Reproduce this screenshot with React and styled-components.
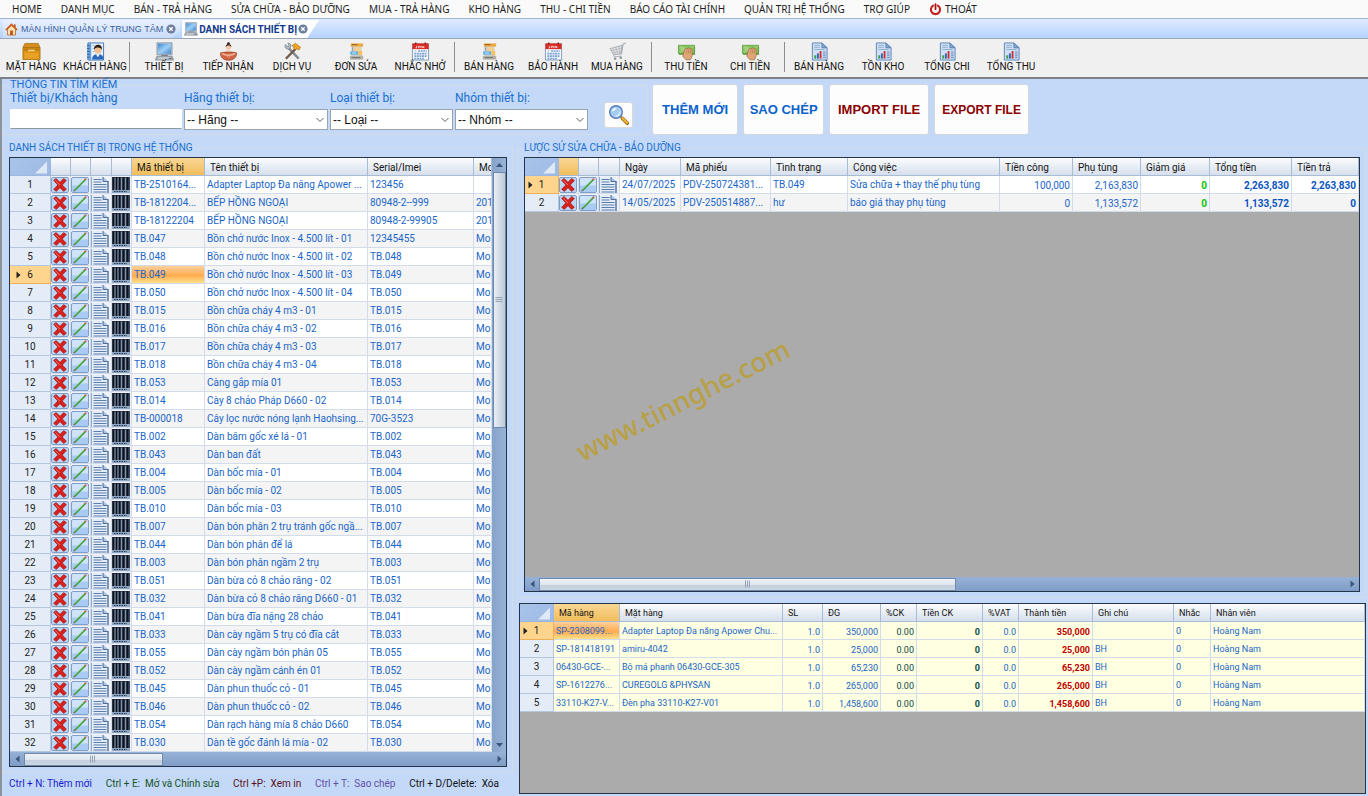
import styled, { createGlobalStyle, css } from 'styled-components';

const GlobalStyle = createGlobalStyle`
  * { box-sizing: border-box; }
  body { margin: 0; background: #c3d9f7; }
  button, input, select { font-family: inherit; margin: 0; }
`;

const sans = "'Liberation Sans', Arial, sans-serif";
const compact = "Roboto, 'Liberation Sans', Arial, sans-serif";
const humanist = "'Noto Sans', 'Open Sans', sans-serif";

const Page = styled.div`
  display: flex;
  flex-direction: column;
  height: 100vh;
  min-height: 480px;
  overflow: hidden;
  font-family: ${compact};
  font-size: 10px;
  color: #1c1c1c;
`;

/* ---------- menu ---------- */

const MenuBar = styled.nav`
  display: flex;
  gap: 19px;
  height: 18px;
  padding: 0 12px;
  background: #fafafa;
  white-space: nowrap;
`;

const MenuItem = styled.button`
  display: flex;
  align-items: center;
  gap: 3px;
  padding: 0;
  border: 0;
  background: none;
  font-family: ${humanist};
  font-size: 10px;
  color: #1c1c1c;
`;

/* ---------- tabs ---------- */

const TabBar = styled.div`
  display: flex;
  gap: 2px;
  height: 21px;
  padding: 1px 3px 0 3px;
  border-top: 1px solid #9fb6d6;
  border-bottom: 1px solid #9aa7b8;
  background: linear-gradient(#e0ebff, #b5d2fd);
`;

const Tab = styled.button`
  display: flex;
  align-items: center;
  gap: ${p => (p.$active ? '1px' : '3px')};
  padding: 0 ${p => (p.$active ? '11px' : '4px')} 0 2px;
  border: 0;
  background: ${p => (p.$active ? '#ffffff' : 'linear-gradient(#e9f1ff, #c9dcf8)')};
  clip-path: ${p => (p.$active
    ? 'polygon(0 0, 100% 0, calc(100% - 12px) 100%, 0 100%)'
    : 'polygon(0 0, 100% 0, 100% 55%, calc(100% - 8px) 100%, 0 100%)')};
  font-family: ${p => (p.$active ? compact : sans)};
  font-size: ${p => (p.$active ? '10px' : '9px')};
  font-weight: ${p => (p.$active ? 700 : 400)};
  color: ${p => (p.$active ? '#123a8c' : '#3b5f9f')};
  white-space: nowrap;
`;

/* ---------- toolbar ---------- */

const ToolBar = styled.div`
  display: flex;
  height: 40px;
  border-bottom: 2px solid #7d8187;
  background: #f0f0f0;
`;

const ToolButton = styled.button`
  flex: none;
  display: flex;
  flex-direction: column;
  align-items: center;
  width: 64px;
  padding: 3px 0 0;
  border: 0;
  background: none;
  font-size: 10px;
  line-height: 12px;
  color: #111;
  white-space: nowrap;
  &:first-child { margin-left: -1px; }
`;

const ToolSeparator = styled.div`
  flex: none;
  width: 1px;
  margin: 3px 2px 5px;
  background: #8d8d8d;
`;

/* ---------- main area ---------- */

const Main = styled.main`
  flex: 1;
  min-height: 0;
  display: flex;
  flex-direction: column;
  padding-right: 2px;
  border-left: 2px solid #8b929c;
  background: #c3d9f7;
`;

const SearchRow = styled.div`
  display: flex;
  gap: 4px;
  height: 56px;
  margin-bottom: 7px;
`;

const Group = styled.fieldset`
  flex: ${p => p.$flex || '1'};
  display: flex;
  flex-direction: column;
  min-width: 0;
  min-height: 0;
  margin: 0;
  padding: ${p => p.$pad || '3px 5px 5px 6px'};
  border: 1px solid #d2dbe6;
`;

const GroupTitle = styled.legend`
  margin: 0;
  padding: 0 1px 0 0;
  line-height: 12px;
  font-size: ${p => (p.$large ? '11px' : '10px')};
  color: #1a6fd0;
  white-space: nowrap;
`;

const SearchFields = styled.div`
  display: flex;
  align-items: flex-start;
  gap: 2px;
`;

const Field = styled.label`
  display: flex;
  flex-direction: column;
  gap: 3px;
  width: ${p => p.$width};
  font-size: 12px;
  line-height: 15px;
  color: #1a6fd0;
  white-space: nowrap;
`;

const TextBox = styled.input`
  width: 100%;
  height: 20px;
  padding: 0 3px;
  border: 1px solid #ffffff;
  border-bottom-color: #8f97a3;
  background: #ffffff;
  font-size: 12px;
`;

const DropDown = styled.select`
  width: 100%;
  height: 21px;
  padding: 0 2px;
  border: 1px solid #9aa3b0;
  border-radius: 0;
  appearance: none;
  background: #ffffff url("data:image/svg+xml,%3Csvg xmlns='http://www.w3.org/2000/svg' width='8' height='6'%3E%3Cpath d='M.5 1 4 4.500 7.500 1' fill='none' stroke='%23606060'/%3E%3C/svg%3E") no-repeat right 3px center;
  font-family: ${sans};
  font-size: 12px;
  color: #111;
`;

const SearchButton = styled.button`
  display: flex;
  align-items: center;
  justify-content: center;
  width: 29px;
  height: 26px;
  margin: 11px 0 0 14px;
  padding: 0;
  border: 1px solid #d9d9d9;
  border-radius: 3px;
  background: #fdfdfd;
`;

const ActionBar = styled.div`
  display: flex;
  flex: 716 1 0;
  gap: 5px;
  padding-top: 5px;
`;

const ActionButton = styled.button`
  width: ${p => p.$width};
  padding: 0;
  border: 1px solid #d3d8df;
  border-radius: 3px;
  background: #fdfdfd;
  font-family: ${sans};
  font-size: ${p => (p.$small ? '12px' : '13px')};
  font-weight: 700;
  color: ${p => p.$color};
  white-space: nowrap;
`;

const Columns = styled.div`
  flex: 1;
  min-height: 0;
  display: grid;
  grid-template-columns: minmax(0, 511fr) minmax(0, 849fr);
  gap: 4px;
`;

const Column = styled.section`
  display: flex;
  flex-direction: column;
  min-height: 0;
  min-width: 0;
`;

const DetailArea = styled.div`
  flex: none;
  display: flex;
  flex-direction: column;
  height: 198px;
  padding: 5px 0 2px 2px;
`;

const Shortcuts = styled.footer`
  display: flex;
  justify-content: space-between;
  align-items: center;
  height: 23px;
  padding: 0 14px 2px 7px;
  white-space: pre;
`;

const Shortcut = styled.span`
  color: ${p => p.$color};
`;

/* ---------- data grid ---------- */

const Frame = styled.div`
  position: relative;
  flex: 1;
  display: flex;
  flex-direction: column;
  min-height: 0;
  border: 1px solid #26344a;
  background: #ababab;
  overflow: hidden;
`;

const Viewport = styled.div`
  flex: 1;
  display: flex;
  min-height: 0;
`;

const TableClip = styled.div`
  flex: 1;
  min-width: 0;
  overflow: hidden;
`;

const Table = styled.table`
  width: 100%;
  table-layout: fixed;
  border-collapse: separate;
  border-spacing: 0;
  font-size: ${p => (p.$small ? '9px' : '10px')};
`;

const HeadCell = styled.th`
  height: 18px;
  padding: 2px 0 0 5px;
  border-right: 1px solid #a9bcd5;
  border-bottom: 1px solid #a9bcd5;
  background: ${p => (p.$active ? 'linear-gradient(#f9d794, #f1bd5c)' : 'linear-gradient(#fbfcfe, #d6dfec)')};
  font-weight: 400;
  line-height: 15px;
  text-align: left;
  color: #141414;
  white-space: nowrap;
  overflow: hidden;
`;

const CornerCell = styled.th`
  height: 18px;
  padding: 0;
  border-right: 1px solid #9fb7dc;
  border-bottom: 1px solid #9fb7dc;
  background: linear-gradient(135deg, #a9c4ea, #9dbae4);
`;

const CornerMark = styled.div`
  width: 12px;
  height: 12px;
  margin: 2px 3px 0 auto;
  background: #dfe8f5;
  clip-path: polygon(100% 0, 100% 100%, 0 100%);
`;

const RowHead = styled.th`
  height: 18px;
  padding: 0;
  border-right: 1px solid #b4c6de;
  border-bottom: 1px solid #b4c6de;
  background: #e4ecf7;
  font-weight: 400;
  font-size: 10px;
  line-height: 17px;
  text-align: center;
  color: #222;
  ${p => p.$active && css`
    border-color: #f0b05a;
    background: #ffd58d;
  `}
`;

const RowHeadInner = styled.span`
  display: flex;
  align-items: center;
  justify-content: center;
  gap: 5px;
  padding-right: ${p => (p.$active ? '12px' : '0')};
`;

const Cell = styled.td`
  height: 18px;
  padding: ${p => (p.$num ? '3px 2px 0 0' : '1px 0 0 2px')};
  border-right: 1px solid #d3dcea;
  border-bottom: 1px solid #d3dcea;
  background: ${p => p.$bg};
  font-weight: ${p => (p.$bold ? 700 : 400)};
  line-height: ${p => (p.$num ? '14px' : '16px')};
  text-align: ${p => (p.$num ? 'right' : 'left')};
  color: ${p => p.$color || '#1a66c8'};
  white-space: nowrap;
  overflow: hidden;
  ${p => p.$active && css`
    background: linear-gradient(#fdd09a 0%, #ffb566 40%, #ffab50 55%, #ffdf88 100%);
  `}
`;

const IconCell = styled.td`
  height: 18px;
  padding: 0;
  border-right: 1px solid #d3dcea;
  border-bottom: 1px solid #d3dcea;
  background: #eef2f8;
`;

const CellButton = styled.button`
  display: flex;
  align-items: center;
  width: 100%;
  height: 17px;
  padding: 0;
  border: 0;
  background: none;
`;

const ScrollV = styled.div`
  flex: none;
  display: flex;
  flex-direction: column;
  align-items: center;
  justify-content: space-between;
  width: 14px;
  background: linear-gradient(90deg, #86a3cb, #97b2d7);
`;

const ScrollH = styled.div`
  flex: none;
  display: flex;
  align-items: center;
  height: 14px;
  background: linear-gradient(#97b2d7, #7e9cc6);
`;

const ThumbV = styled.div`
  flex: 0 0 ${p => p.$size};
  display: flex;
  align-items: center;
  justify-content: center;
  width: 13px;
  margin-bottom: auto;
  border: 1px solid #6f89ad;
  background: linear-gradient(90deg, #e9eef4, #bccad8);
`;

const ThumbH = styled.div`
  flex: 0 0 ${p => p.$size};
  display: flex;
  align-items: center;
  justify-content: center;
  height: 13px;
  margin-right: auto;
  border: 1px solid #6f89ad;
  background: linear-gradient(#eef2f7 0%, #dfe6ee 50%, #c3cfde 55%, #ccd7e4 100%);
`;

const ScrollArrow = styled.button`
  flex: none;
  display: flex;
  align-items: center;
  justify-content: center;
  width: 14px;
  height: 14px;
  padding: 0;
  border: 0;
  background: none;
`;

const Watermark = styled.div`
  position: absolute;
  top: 222px;
  left: 36px;
  width: 244px;
  font-family: ${humanist};
  font-size: 27px;
  font-weight: 500;
  line-height: 40px;
  text-align: center;
  color: #b8a047;
  white-space: nowrap;
  transform: rotate(-27deg);
  pointer-events: none;
`;

/* ---------- icons ---------- */

const PowerIcon = () => (
  <svg width="13" height="13" viewBox="0 0 13 13" fill="none" strokeLinecap="round">
    <path d="M4.100 2.600a4.600 4.600 0 1 0 4.800 0" stroke="#c4201d" strokeWidth="2.100" />
    <path d="M6.500 1.200v5" stroke="#a31412" strokeWidth="1.800" />
  </svg>
);

const HomeIcon = () => (
  <svg width="13" height="13" viewBox="0 0 13 13">
    <path d="M2.500 6v6h8V6L6.500 2.500z" fill="#f7e2b4" stroke="#b5691f" strokeWidth=".8" />
    <path d="M9 1.500h1.600v3H9z" fill="#b5481f" />
    <path d="M.8 7 6.500 1.300 12.200 7" fill="none" stroke="#d4581c" strokeWidth="1.600" />
    <path d="M5.200 7.500h2.600V12H5.200z" fill="#c0461e" />
  </svg>
);

const CloseIcon = () => (
  <svg width="10" height="10" viewBox="0 0 10 10">
    <circle cx="5" cy="5" r="4.600" fill="#6e7f9d" />
    <path d="m3.300 3.300 3.400 3.400m0-3.400L3.300 6.700" stroke="#fff" strokeWidth="1.300" />
  </svg>
);

const ComputerIcon = ({ size = 19 }) => (
  <svg width={size} height={size} viewBox="0 0 20 20">
    <defs>
      <linearGradient id="screen" x1="0" y1="0" x2="1" y2="1">
        <stop offset="0" stopColor="#3f8ad6" />
        <stop offset=".5" stopColor="#9fd0f5" />
        <stop offset="1" stopColor="#3f86cf" />
      </linearGradient>
    </defs>
    <path d="M2 .8h16v12.700H2z" fill="#aebccb" stroke="#7c8da3" strokeWidth=".7" />
    <path d="M3.200 2h13.600v10.300H3.200z" fill="url(#screen)" />
    <path d="M7 13.500h6l1 1.500H6z" fill="#78838f" />
    <path d="M2 15h16l1.500 4H.5z" fill="#a9b0b8" stroke="#717b87" strokeWidth=".7" />
    <path d="M3.500 16.500h13M3 17.800h10" stroke="#e6eaee" strokeWidth=".6" />
    <path d="M14.500 17.200h3" stroke="#424b55" strokeWidth=".8" />
  </svg>
);

const BoxIcon = () => (
  <svg width="19" height="19" viewBox="0 0 20 20">
    <path d="M3 1.500h14l2 4.500H1z" fill="#d68f1c" stroke="#9a610c" strokeWidth=".7" />
    <path d="M1 6h18v12.500H1z" fill="#dc9416" stroke="#a86a0b" strokeWidth=".8" />
    <path d="M2 7h16v2H2z" fill="#b97813" />
    <path d="M6.500 8h7v1.800h-7z" fill="#f3cd7c" />
    <path d="M2.500 11.500h15v6h-15z" fill="#e8a42a" opacity=".8" />
  </svg>
);

const ContactIcon = () => (
  <svg width="19" height="19" viewBox="0 0 20 20">
    <path d="M2 1h16.500v18H2z" fill="#e8f1fb" stroke="#3f78b8" />
    <path d="M2 1h3.500v18H2z" fill="#6ba0d8" />
    <path d="M1 4h3M1 7h3M1 10h3M1 13h3M1 16h3" stroke="#2b5a94" strokeWidth=".9" />
    <path d="M7 4h2M7 7h2M7 10h2" stroke="#80aede" />
    <path d="M6.500 18.500c0-4 2-5.500 6-5.500s6 1.500 6 5.500z" fill="#2c66b8" />
    <path d="m10.500 13 2 3 2-3z" fill="#fff" />
    <circle cx="12.500" cy="8.500" r="3.700" fill="#f1bf8d" />
    <path d="M8.500 8.500c-.5-4 2-5.500 4.300-5.500 3 0 4.400 2.300 3.900 5.300-1-2.300-3-2.800-5-2.500-1.700.2-2.700 1-3.200 2.700z" fill="#2b1d15" />
  </svg>
);

const PersonIcon = () => (
  <svg width="19" height="19" viewBox="0 0 20 20">
    <circle cx="10" cy="1.800" r="1.500" fill="#30201c" />
    <circle cx="10" cy="5.300" r="2.900" fill="#f4c7a0" />
    <path d="M7 5.300C7 3 8.300 2.100 10 2.100s3 .9 3 3.200C12 4.100 11 3.800 10 3.800s-2 .3-3 1.500z" fill="#30201c" />
    <path d="M6.500 12c0-2.800 1.500-4 3.500-4s3.500 1.200 3.500 4z" fill="#f3dccb" />
    <path d="M1.500 11.500c2-1.200 15-1.200 17 0 .3 4.800-3.500 7.700-8.500 7.700s-8.800-2.900-8.500-7.700z" fill="#cf6543" stroke="#9a3c22" strokeWidth=".7" />
    <path d="M3 12.300c4 2.200 10 2.200 14 0" fill="none" stroke="#f6b59c" strokeWidth="1.500" />
    <path d="m8 14.500 2 2 2-2" fill="none" stroke="#efa080" />
  </svg>
);

const ToolsIcon = () => (
  <svg width="19" height="19" viewBox="0 0 20 20">
    <path d="m5 5.500 11.500 12" stroke="#848b93" strokeWidth="2.600" />
    <path d="M2 4.500c0-1 .3-1.600.8-2L5 5l1.500-1-1.400-2.700C7.500 1 9 2.700 8.300 5.300L6 7.500C3.800 7.500 2 6.500 2 4.500z" fill="#aeb6be" stroke="#6b737b" strokeWidth=".6" />
    <path d="M13.500 7 3 17.700" stroke="#6f5949" strokeWidth="2.400" />
    <path d="m9.500 4 3.500-2.700 5.500 4.200-1.800 3-2.200-1.700-1.500 1.400-2-1.800 1-1.600z" fill="#f5a623" stroke="#a96c0a" strokeWidth=".7" />
  </svg>
);

const OrderIcon = () => (
  <svg width="19" height="19" viewBox="0 0 20 20">
    <path d="M4.500 3.500h11V18h-11z" fill="#cfd6dc" />
    <path d="M4 1.500h13v3.300H4z" fill="#eda63c" />
    <path d="M5 2.800h6" stroke="#8a5d1a" />
    <path d="M7.500 5.500h7v4h-7z" fill="#f2cf8c" />
    <path d="M3.500 10h8v3.200h-8z" fill="#4aa3dc" />
    <path d="M5 11.600h5" stroke="#dff1fc" />
    <path d="M12 9.500h4V14h-4z" fill="#f3c25f" />
    <path d="M3 14.500h14v4H3z" fill="#b3b0a8" />
    <path d="M5 16.500h9" stroke="#6b6a66" />
    <path d="M6 5.500v4" stroke="#8a949e" />
  </svg>
);

const CalendarIcon = () => (
  <svg width="19" height="19" viewBox="0 0 20 20">
    <path d="M1.500 2h17v17h-17z" fill="#f4f8fd" stroke="#6685ad" strokeWidth=".8" />
    <path d="M1.500 1.500h17v6h-17z" fill="#d92b22" />
    <path d="M5 .5v2M15 .5v2" stroke="#8d1712" strokeWidth="1.400" />
    <path d="M6 4v2.200H4.800M8 6.400V4.500h1.700v1.900M11.500 6.400V4.300l2 2V4.200" fill="none" stroke="#fff" strokeWidth=".8" />
    <path d="M7.500 9.500h9M3.500 12.200h13M3.500 14.900h13M3.500 17.500h10" stroke="#7ba3d4" strokeWidth="1.700" strokeDasharray="2.100 .6" />
    <path d="M3.500 9.500h2" stroke="#b8cbe3" strokeWidth="1.500" />
  </svg>
);

const CartIcon = () => (
  <svg width="19" height="19" viewBox="0 0 20 20" fill="none">
    <path d="M2 7 15 3.500l-1.500 9-7.500 1z" fill="#dfe1e3" stroke="#a4a9ae" strokeWidth=".9" />
    <path d="m5 6.500 3 7M8.300 5.500l2 7.500M11.700 4.500l.8 8.500M3.500 9.200l11-2.700M5 11.500l9-1.800" stroke="#aeb3b8" strokeWidth=".7" />
    <path d="m14 13 1.800-10.500L18.500 1" stroke="#a4a9ae" strokeWidth="1.200" />
    <path d="m6 13.500.5 2.300 7.500-1" stroke="#a8adb2" />
    <circle cx="7.500" cy="17.500" r="1.300" fill="#8d9297" />
    <circle cx="13.500" cy="16.500" r="1.300" fill="#8d9297" />
  </svg>
);

const MoneyIcon = () => (
  <svg width="19" height="19" viewBox="0 0 20 20">
    <path d="M2 5.500h17v8H2z" fill="#5c9f3d" />
    <path d="M1.500 3.500h17v8.500h-17z" fill="#86c45c" stroke="#5b9a3b" strokeWidth=".8" />
    <circle cx="6" cy="7.500" r="2.400" fill="#a4d381" />
    <path d="M3 5h2M15 5h2M3 10.500h2" stroke="#b3dc95" />
    <path d="M6.500 12.500 8 8l1.500-1.500 1.200.5 1.300-.9 1.200.7 1.500-.3L16 8v6.500l-1.800 4.300H9.500L6.200 15z" fill="#dfa777" stroke="#96633c" strokeWidth=".7" />
    <path d="M10.300 8v4M12.300 7.500V12M14.200 8v4" stroke="#a9734a" strokeWidth=".6" />
  </svg>
);

const ReportIcon = () => (
  <svg width="19" height="19" viewBox="0 0 20 20">
    <path d="M2.500 1h10l5.500 5v13H2.500z" fill="#cfe0f4" stroke="#5d86b8" />
    <path d="M12.500 1v5.200H18z" fill="#7fa7d6" stroke="#4c75a8" strokeWidth=".7" />
    <path d="M4.500 3.500h6M4.500 5.700h6M4.500 7.900h11" stroke="#86a8d1" strokeWidth=".9" />
    <path d="M4.500 14h2v3.500h-2z" fill="#3a9e3d" />
    <path d="M7.300 12h2v5.500h-2z" fill="#2c64b5" />
    <path d="M10.100 9.500h2v8h-2z" fill="#d3302a" />
    <path d="M13.500 10.500h3M13.500 12.500h3M13.500 14.500h3M13.500 16.500h3" stroke="#4f7db5" strokeWidth=".9" />
  </svg>
);

const MagnifierIcon = () => (
  <svg width="22" height="22" viewBox="0 0 22 22">
    <path d="m12 12 2.500 2.500" stroke="#8b929c" strokeWidth="2" />
    <path d="m14.300 14.300 5 5" stroke="#9a6a1e" strokeWidth="3.600" strokeLinecap="round" />
    <path d="m14.500 14.200 4.500 4.500" stroke="#f3b33b" strokeWidth="2.200" strokeLinecap="round" />
    <circle cx="8" cy="8" r="6.300" fill="#a4cdf3" stroke="#5a7cb4" strokeWidth="1.400" />
    <path d="M4 7.500C4.300 5 6 3.800 8.700 3.900 7.500 5 6.500 7 4 7.500z" fill="#fff" />
    <path d="M12 7.500c.3 2.500-1.500 4.600-4.500 4.700" stroke="#e2f2ff" strokeWidth="1.300" fill="none" />
  </svg>
);

const DeleteIcon = () => (
  <svg width="18" height="16" viewBox="0 0 18 16">
    <rect x=".5" y=".5" width="17" height="15" rx="1.500" fill="#bcd7f6" stroke="#7f9fc8" />
    <path d="M2.600 3.400 5 1.500 9 5.200l3.700-3.700 2.700 2.100L11.300 8l4.100 4.200-2.700 2.300L9 10.700 5.300 14.500l-2.700-2.200L6.800 8z" fill="#d8201c" stroke="#9b1210" strokeWidth=".6" />
    <path d="M4.300 3.500 9 8" stroke="#f2716b" />
  </svg>
);

const EditIcon = () => (
  <svg width="18" height="16" viewBox="0 0 18 16">
    <rect x=".5" y=".5" width="17" height="15" rx="1.500" fill="#cfe3fa" stroke="#7f9fc8" />
    <path d="M1 8.500h16v6.500H1z" fill="#a9cbf3" />
    <path d="M3.800 13 14.200 2.600" stroke="#3c9c3a" strokeWidth="1.800" />
    <path d="M4 12 13.500 2.500" stroke="#a5dc98" strokeWidth=".6" />
    <path d="m13.800 3 1.400-1.400" stroke="#c86a5a" strokeWidth="1.800" />
    <path d="m2.600 14.200 1.300-1.300" stroke="#7b6a4a" strokeWidth="1.300" />
  </svg>
);

const DocumentIcon = () => (
  <svg width="18" height="16" viewBox="0 0 18 16">
    <path d="M.5 0h12.500l4.500 4.500V16H.5z" fill="#e4edf8" />
    <path d="M17 4.500V16" stroke="#4d6f9b" strokeWidth="1.400" />
    <path d="M.5 0v16" stroke="#8faacc" />
    <path d="M12 0v4.500h5.500" fill="#a9c3e2" stroke="#4d6f9b" />
    <path d="M2.500 2.500h8M2.500 5h8M2.500 7.500h13M2.500 10h13M2.500 12.500h13M2.500 15h13" stroke="#5b7dab" strokeWidth="1.200" />
  </svg>
);

const BarcodeIcon = () => (
  <svg width="18" height="16" viewBox="0 0 18 16">
    <path d="M0 0h18v16H0z" fill="#8fa5c4" />
    <path d="M0 0h18v13H0z" fill="#39465c" />
    <path d="M1.500 0v13M4.500 0v13M7.500 0v13M11.500 0v13M15.500 0v13" stroke="#0d131d" strokeWidth="1.600" />
    <path d="M3 1v12M6 1v12M9.500 1v12M13.500 1v12" stroke="#9fb3cf" strokeWidth=".7" />
    <path d="M2 14.500h13" stroke="#26344c" strokeDasharray="1.500 1" />
  </svg>
);

const Arrow = ({ turn = 0, color = '#3d5579' }) => (
  <svg width="7" height="8" viewBox="0 0 7 8">
    <path d="M1.500 .5v7l4-3.500z" fill={color} transform={`rotate(${turn} 3.500 4)`} />
  </svg>
);

const Grip = ({ vertical }) => (
  <svg width="8" height="8" viewBox="0 0 8 8">
    <path
      d={vertical ? 'M.5 1.500h7M.5 3.500h7M.5 5.500h7' : 'M1.500 .5v7M3.500 .5v7M5.500 .5v7'}
      stroke="#94a2b3"
    />
  </svg>
);

/* ---------- data ---------- */

const menu = [
  'HOME', 'DANH MỤC', 'BÁN - TRẢ HÀNG', 'SỬA CHỮA - BẢO DƯỠNG', 'MUA - TRẢ HÀNG', 'KHO HÀNG',
  'THU - CHI TIỀN', 'BÁO CÁO TÀI CHÍNH', 'QUẢN TRỊ HỆ THỐNG', 'TRỢ GIÚP',
];

const toolbar = [
  [['MẶT HÀNG', BoxIcon], ['KHÁCH HÀNG', ContactIcon]],
  [['THIẾT BỊ', ComputerIcon], ['TIẾP NHẬN', PersonIcon], ['DỊCH VỤ', ToolsIcon], ['ĐƠN SỬA', OrderIcon], ['NHẮC NHỞ', CalendarIcon]],
  [['BÁN HÀNG', OrderIcon], ['BẢO HÀNH', CalendarIcon], ['MUA HÀNG', CartIcon]],
  [['THU TIỀN', MoneyIcon], ['CHI TIỀN', MoneyIcon]],
  [['BÁN HÀNG', ReportIcon], ['TỒN KHO', ReportIcon], ['TỔNG CHI', ReportIcon], ['TỔNG THU', ReportIcon]],
];

const actions = [
  { label: 'THÊM MỚI', width: '86px', color: '#0a62cf' },
  { label: 'SAO CHÉP', width: '81px', color: '#0a62cf' },
  { label: 'IMPORT FILE', width: '100px', color: '#8b0000' },
  { label: 'EXPORT FILE', width: '95px', color: '#8b0000', small: true },
];

// serial repeats the code when it is not given
const devices = [
  ['TB-2510164...', 'Adapter Laptop Đa năng Apower ...', '123456', ''],
  ['TB-1812204...', 'BẾP HỒNG NGOẠI', '80948-2--999', '201'],
  ['TB-18122204', 'BẾP HỒNG NGOẠI', '80948-2-99905', '201'],
  ['TB.047', 'Bồn chở nước Inox - 4.500 lít - 01', '12345455'],
  ['TB.048', 'Bồn chở nước Inox - 4.500 lít - 02'],
  ['TB.049', 'Bồn chở nước Inox - 4.500 lít - 03'],
  ['TB.050', 'Bồn chở nước Inox - 4.500 lít - 04'],
  ['TB.015', 'Bồn chữa cháy 4 m3 - 01'],
  ['TB.016', 'Bồn chữa cháy 4 m3 - 02'],
  ['TB.017', 'Bồn chữa cháy 4 m3 - 03'],
  ['TB.018', 'Bồn chữa cháy 4 m3 - 04'],
  ['TB.053', 'Càng gắp mía 01'],
  ['TB.014', 'Cày 8 chảo Pháp D660 - 02'],
  ['TB-000018', 'Cây lọc nước nóng lạnh Haohsing...', '70G-3523'],
  ['TB.002', 'Dàn băm gốc xé lá - 01'],
  ['TB.043', 'Dàn ban đất'],
  ['TB.004', 'Dàn bốc mía - 01'],
  ['TB.005', 'Dàn bốc mía - 02'],
  ['TB.010', 'Dàn bốc mía - 03'],
  ['TB.007', 'Dàn bón phân 2 trụ tránh gốc ngầ...'],
  ['TB.044', 'Dàn bón phân để lá'],
  ['TB.003', 'Dàn bón phân ngầm 2 trụ'],
  ['TB.051', 'Dàn bừa cỏ 8 chảo răng - 02'],
  ['TB.032', 'Dàn bừa cỏ 8 chảo răng D660 - 01'],
  ['TB.041', 'Dàn bừa đĩa nặng 28 chảo'],
  ['TB.033', 'Dàn cày ngầm 5 trụ có đĩa cắt'],
  ['TB.055', 'Dàn cày ngầm bón phân 05'],
  ['TB.052', 'Dàn cày ngầm cánh én 01'],
  ['TB.045', 'Dàn phun thuốc cỏ - 01'],
  ['TB.046', 'Dàn phun thuốc cỏ - 02'],
  ['TB.054', 'Dàn rạch hàng mía 8 chảo D660'],
  ['TB.030', 'Dàn tề gốc đánh lá mía - 02'],
].map(([code, name, serial = code, model = 'Mo']) => [code, name, serial, model]);

const iconCols = {
  del: { icon: DeleteIcon, label: 'Xóa', width: 20 },
  edit: { icon: EditIcon, label: 'Chỉnh sửa', width: 20 },
  doc: { icon: DocumentIcon, label: 'Xem in', width: 21 },
  bar: { icon: BarcodeIcon, label: 'Mã vạch', width: 20 },
};

const deviceCols = [
  iconCols.del, iconCols.edit, iconCols.doc, iconCols.bar,
  { title: 'Mã thiết bị', width: 73 },
  { title: 'Tên thiết bị', width: 163 },
  { title: 'Serial/Imei', width: 106 },
  { title: 'Mo' },
];

const historyCols = [
  iconCols.del, iconCols.edit, iconCols.doc,
  { title: 'Ngày', width: 61 },
  { title: 'Mã phiếu', width: 90 },
  { title: 'Tình trạng', width: 77 },
  { title: 'Công việc', width: 152 },
  { title: 'Tiền công', width: 73, num: true },
  { title: 'Phụ tùng', width: 68, num: true },
  { title: 'Giảm giá', width: 69, bold: true, num: true, color: '#0cc20c' },
  { title: 'Tổng tiền', width: 82, bold: true, num: true, color: '#0a55c0' },
  { title: 'Tiền trả', bold: true, num: true, color: '#0a55c0' },
];

const history = [
  ['24/07/2025', 'PDV-250724381...', 'TB.049', 'Sửa chữa + thay thế phụ tùng', '100,000', '2,163,830', '0', '2,263,830', '2,263,830'],
  ['14/05/2025', 'PDV-250514887...', 'hư', 'báo giá thay phụ tùng', '0', '1,133,572', '0', '1,133,572', '0'],
];

const itemCols = [
  { title: 'Mã hàng', width: 66 },
  { title: 'Mặt hàng', width: 163 },
  { title: 'SL', width: 40, num: true },
  { title: 'ĐG', width: 58, num: true },
  { title: '%CK', width: 36, num: true, color: '#0b4a4a' },
  { title: 'Tiền CK', width: 66, num: true, bold: true, color: '#0b4a4a' },
  { title: '%VAT', width: 36, num: true },
  { title: 'Thành tiền', width: 74, num: true, bold: true, color: '#c00000' },
  { title: 'Ghi chú', width: 81 },
  { title: 'Nhắc', width: 37 },
  { title: 'Nhân viên' },
];

const items = [
  ['SP-2308099...', 'Adapter Laptop Đa năng Apower Chu...', '1.0', '350,000', '0.00', '0', '0.0', '350,000', '', '0', 'Hoàng Nam'],
  ['SP-181418191', 'amiru-4042', '1.0', '25,000', '0.00', '0', '0.0', '25,000', 'BH', '0', 'Hoàng Nam'],
  ['06430-GCE-...', 'Bộ má phanh 06430-GCE-305', '1.0', '65,230', '0.00', '0', '0.0', '65,230', 'BH', '0', 'Hoàng Nam'],
  ['SP-1612276...', 'CUREGOLG &PHYSAN', '1.0', '265,000', '0.00', '0', '0.0', '265,000', 'BH', '0', 'Hoàng Nam'],
  ['33110-K27-V...', 'Đèn pha 33110-K27-V01', '1.0', '1,458,600', '0.00', '0', '0.0', '1,458,600', 'BH', '0', 'Hoàng Nam'],
];

const shortcuts = [
  ['Ctrl + N: Thêm mới', '#1a1ad0'],
  ['Ctrl + E:  Mở và Chỉnh sửa', '#14521f'],
  ['Ctrl +P:  Xem in', '#5a1020'],
  ['Ctrl + T:  Sao chép', '#6350a8'],
  ['Ctrl + D/Delete:  Xóa', '#111111'],
];

/* ---------- pieces ---------- */

function DataTable({ cols, rows, headWidth, activeRow, activeCol, stripes, small }) {
  const textStart = cols.filter(c => c.icon).length;

  return (
    <Table $small={small}>
      <colgroup>
        <col width={headWidth} />
        {cols.map((c, i) => <col key={i} width={c.width} />)}
      </colgroup>
      <thead>
        <tr>
          <CornerCell><CornerMark /></CornerCell>
          {cols.map((c, i) => (
            <HeadCell key={i} $active={i === activeCol}>{c.title}</HeadCell>
          ))}
        </tr>
      </thead>
      <tbody>
        {rows.map((row, r) => (
          <tr key={r}>
            <RowHead scope="row" $active={r === activeRow}>
              <RowHeadInner $active={r === activeRow}>
                {r === activeRow && <Arrow color="#222" />}
                {r + 1}
              </RowHeadInner>
            </RowHead>
            {cols.map((c, i) => (c.icon ? (
              <IconCell key={i}>
                <CellButton type="button" aria-label={c.label}><c.icon /></CellButton>
              </IconCell>
            ) : (
              <Cell
                key={i}
                $bg={stripes[r % stripes.length]}
                $active={r === activeRow && i === activeCol}
                $num={c.num}
                $bold={c.bold}
                $color={c.color}
              >
                {row[i - textStart]}
              </Cell>
            )))}
          </tr>
        ))}
      </tbody>
    </Table>
  );
}

function HorizontalScroll({ size }) {
  return (
    <ScrollH>
      <ScrollArrow type="button" aria-label="Trái"><Arrow turn={180} /></ScrollArrow>
      <ThumbH $size={size}><Grip /></ThumbH>
      <ScrollArrow type="button" aria-label="Phải"><Arrow /></ScrollArrow>
    </ScrollH>
  );
}

function VerticalScroll({ size }) {
  return (
    <ScrollV>
      <ScrollArrow type="button" aria-label="Lên"><Arrow turn={-90} /></ScrollArrow>
      <ThumbV $size={size}><Grip vertical /></ThumbV>
      <ScrollArrow type="button" aria-label="Xuống"><Arrow turn={90} /></ScrollArrow>
    </ScrollV>
  );
}

function Toolbar() {
  return (
    <ToolBar>
      {toolbar.flatMap((group, g) => [
        g > 0 && <ToolSeparator key={`s${g}`} />,
        ...group.map(([label, Icon]) => (
          <ToolButton key={`${g}${label}`} type="button">
            <Icon />
            {label}
          </ToolButton>
        )),
      ])}
    </ToolBar>
  );
}

function SearchPanel() {
  return (
    <Group $flex="639 1 0" $pad="0 0 0 7px">
      <GroupTitle $large>THÔNG TIN TÌM KIẾM</GroupTitle>
      <SearchFields>
        <Field $width="172px">
          Thiết bị/Khách hàng
          <TextBox type="text" />
        </Field>
        <Field $width="144px">
          Hãng thiết bị:
          <DropDown><option>-- Hãng --</option></DropDown>
        </Field>
        <Field $width="123px">
          Loại thiết bị:
          <DropDown><option>-- Loại --</option></DropDown>
        </Field>
        <Field $width="133px">
          Nhóm thiết bị:
          <DropDown><option>-- Nhóm --</option></DropDown>
        </Field>
        <SearchButton type="button" aria-label="Tìm kiếm"><MagnifierIcon /></SearchButton>
      </SearchFields>
    </Group>
  );
}

export default function App() {
  return (
    <Page>
      <GlobalStyle />
      <MenuBar>
        {menu.map(label => <MenuItem key={label} type="button">{label}</MenuItem>)}
        <MenuItem type="button"><PowerIcon />THOÁT</MenuItem>
      </MenuBar>
      <TabBar>
        <Tab type="button"><HomeIcon />MÀN HÌNH QUẢN LÝ TRUNG TÂM<CloseIcon /></Tab>
        <Tab type="button" $active><ComputerIcon size={14} />DANH SÁCH THIẾT BỊ<CloseIcon /></Tab>
      </TabBar>
      <Toolbar />
      <Main>
        <SearchRow>
          <SearchPanel />
          <ActionBar>
            {actions.map(a => (
              <ActionButton key={a.label} type="button" $width={a.width} $color={a.color} $small={a.small}>
                {a.label}
              </ActionButton>
            ))}
          </ActionBar>
        </SearchRow>
        <Columns>
          <Column>
            <Group>
              <GroupTitle>DANH SÁCH THIẾT BỊ TRONG HỆ THỐNG</GroupTitle>
              <Frame>
                <Viewport>
                  <TableClip>
                    <DataTable
                      cols={deviceCols}
                      rows={devices}
                      headWidth={41}
                      activeRow={5}
                      activeCol={4}
                      stripes={['#ffffff', '#f4f4f4']}
                    />
                  </TableClip>
                  <VerticalScroll size="256px" />
                </Viewport>
                <HorizontalScroll size="28%" />
              </Frame>
            </Group>
            <Shortcuts>
              {shortcuts.map(([text, color]) => <Shortcut key={text} $color={color}>{text}</Shortcut>)}
            </Shortcuts>
          </Column>
          <Column>
            <Group>
              <GroupTitle>LƯỢC SỬ SỬA CHỮA - BẢO DƯỠNG</GroupTitle>
              <Frame>
                <Viewport>
                  <TableClip>
                    <DataTable
                      cols={historyCols}
                      rows={history}
                      headWidth={34}
                      activeRow={0}
                      activeCol={0}
                      stripes={['#ffffff', '#f4f4f4']}
                    />
                  </TableClip>
                </Viewport>
                <HorizontalScroll size="50%" />
                <Watermark>www.tinnghe.com</Watermark>
              </Frame>
            </Group>
            <DetailArea>
              <Frame>
                <DataTable
                  cols={itemCols}
                  rows={items}
                  headWidth={34}
                  activeRow={0}
                  activeCol={0}
                  stripes={['#ffffe1']}
                  small
                />
              </Frame>
            </DetailArea>
          </Column>
        </Columns>
      </Main>
    </Page>
  );
}
